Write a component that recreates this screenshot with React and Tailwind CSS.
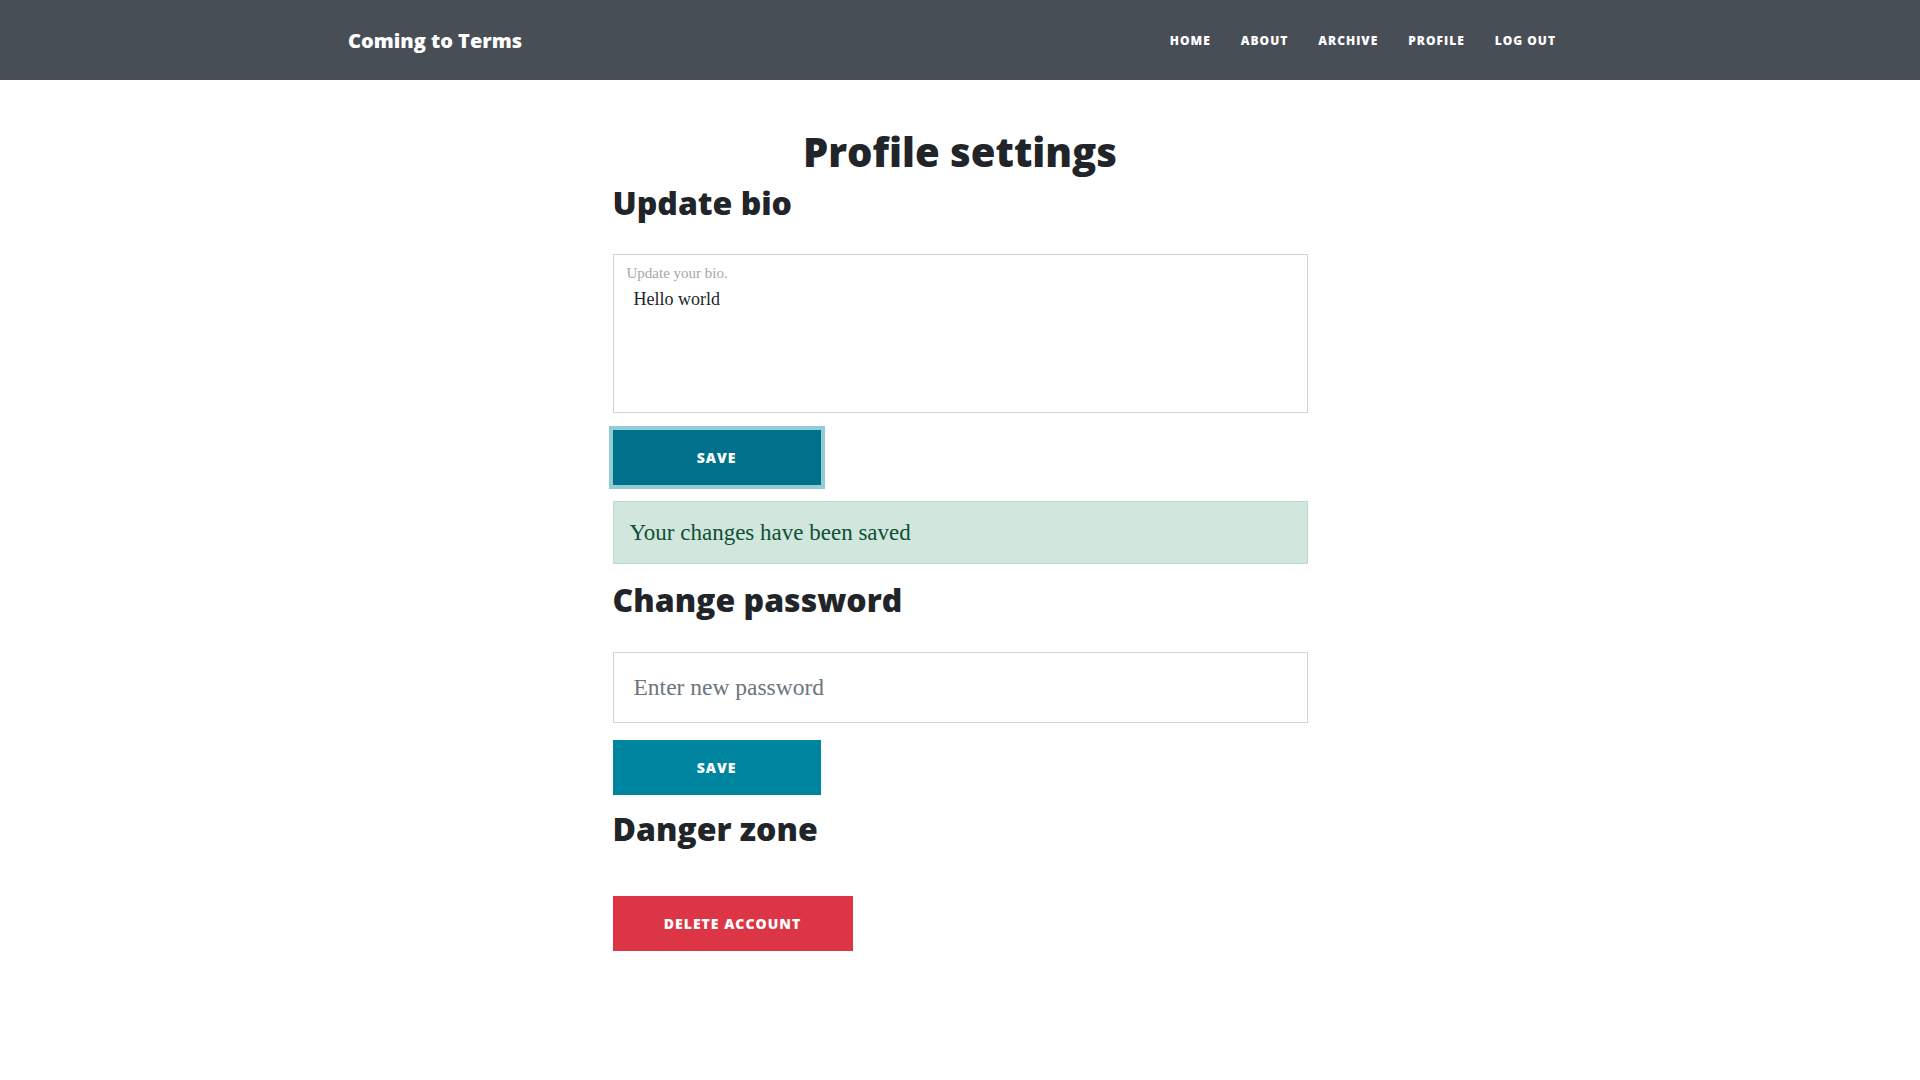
import React from 'react';

const links = ['Home', 'About', 'Archive', 'Profile', 'Log out'];

function Navbar() {
  return (
    <nav className="h-[80px] bg-[#484e56] pt-[2px] font-['Open_Sans','Liberation_Sans',sans-serif]">
      <div className="mx-auto flex h-full w-[1224px] items-center justify-between">
        <a href="#" className="text-[20px] font-extrabold text-white">Coming to Terms</a>
        <ul className="flex items-center pr-[1px]">
          {links.map((l) => (
            <li key={l}>
              <a href="#" className="block px-[15px] text-[12px] font-extrabold uppercase tracking-[1px] text-white">{l}</a>
            </li>
          ))}
        </ul>
      </div>
    </nav>
  );
}

const heading = "font-['Open_Sans','Liberation_Sans',sans-serif] font-extrabold leading-[1.2]";
const serif = "font-['Liberation_Serif','DejaVu_Serif',serif]";
const btn = "block h-[55px] font-['Open_Sans','Liberation_Sans',sans-serif] text-[14px] font-extrabold uppercase tracking-[1px] text-white";

export default function App() {
  return (
    <div className="min-h-screen bg-white text-[#212529]">
      <Navbar />
      <main className="mx-auto w-[695px] pb-24">
        <h1 className={`${heading} mt-[48px] text-center text-[40px]`}>Profile settings</h1>
        <h2 className={`${heading} mt-2 text-[32px]`}>Update bio</h2>

        <div className="relative mt-[32px]">
          <textarea
            defaultValue="Hello world"
            className={`${serif} block h-[159px] w-full resize-none border border-[#ced4da] bg-white pl-[20px] pt-[31px] text-[18px] leading-[27px] text-[#212529] outline-none`}
          />
          <label className={`${serif} absolute left-[14px] top-[9px] text-[15px] leading-[20px] text-[#a4a7ab]`}>Update your bio.</label>
        </div>

        <button className={`${btn} mt-[17px] w-[208px] bg-[#00718a] shadow-[0_0_0_4px_#93cbd7]`}>Save</button>

        <div className={`${serif} mt-[16px] flex h-[63px] items-center border border-[#badbcc] bg-[#d1e7dd] px-[16px] text-[23px] text-[#0f5132]`}>
          Your changes have been saved
        </div>

        <h2 className={`${heading} mt-[17px] text-[32px]`}>Change password</h2>

        <input
          type="password"
          placeholder="Enter new password"
          className={`${serif} mt-[32px] block h-[71px] w-full border border-[#ced4da] bg-white px-[20px] text-[23.5px] text-[#212529] outline-none placeholder:text-[#6c757d]`}
        />

        <button className={`${btn} mt-[17px] w-[208px] bg-[#0085a1]`}>Save</button>

        <h2 className={`${heading} mt-[15px] text-[32px]`}>Danger zone</h2>

        <button className={`${btn} mt-[48px] w-[240px] bg-[#dc3545]`}>Delete account</button>
      </main>
    </div>
  );
}
